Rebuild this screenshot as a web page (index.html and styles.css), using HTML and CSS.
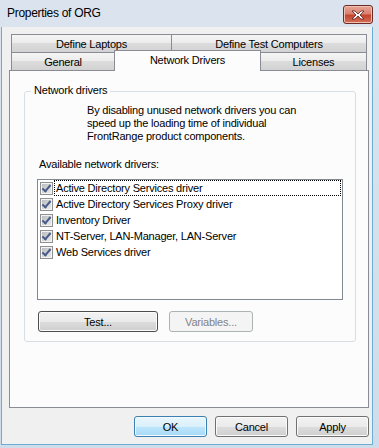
FILE: index.html
```html
<!DOCTYPE html>
<html lang="en">

<head>
  <meta charset="UTF-8">
  <title>Properties of ORG</title>
  <link rel="stylesheet" href="styles.css">
</head>

<body>
  <div class="window">
    <div class="titlebar">
      <span class="title">Properties of ORG</span>
      <span class="close-btn">
        <svg width="16" height="10" viewBox="0 0 16 10">
          <path d="M2 1 L5 1 L8 4 L11 1 L14 1 L10 5 L14 9 L11 9 L8 6 L5 9 L2 9 L6 5 Z" fill="#ffffff" stroke="#5a2020" stroke-width="0.8" stroke-linejoin="round"/>
        </svg>
      </span>
    </div>

    <div class="client">
      <div class="tab-row">
        <div class="tab tab-laptops">Define Laptops</div>
        <div class="tab tab-test">Define Test Computers</div>
      </div>
      <div class="tab-row">
        <div class="tab tab-general">General</div>
        <div class="tab tab-active">Network Drivers</div>
        <div class="tab tab-licenses">Licenses</div>
      </div>

      <div class="tab-page">
        <div class="group">
          <div class="group-label">Network drivers</div>
          <p class="desc">By disabling unused network drivers you can<br>speed up the loading time of individual<br>FrontRange product components.</p>
          <p class="list-label">Available network drivers:</p>
          <ul class="driver-list">
            <li class="driver">
              <span class="check"></span>
              <span class="driver-name focused">Active Directory Services driver</span>
            </li>
            <li class="driver">
              <span class="check"></span>
              <span class="driver-name">Active Directory Services Proxy driver</span>
            </li>
            <li class="driver">
              <span class="check"></span>
              <span class="driver-name">Inventory Driver</span>
            </li>
            <li class="driver">
              <span class="check"></span>
              <span class="driver-name">NT-Server, LAN-Manager, LAN-Server</span>
            </li>
            <li class="driver">
              <span class="check"></span>
              <span class="driver-name">Web Services driver</span>
            </li>
          </ul>
          <div class="group-btns">
            <button class="btn btn-test">Test...</button>
            <button class="btn btn-vars" disabled>Variables...</button>
          </div>
        </div>
      </div>

      <div class="dialog-btns">
        <button class="btn btn-default">OK</button>
        <button class="btn">Cancel</button>
        <button class="btn">Apply</button>
      </div>
    </div>
  </div>
</body>

</html>
```

FILE: styles.css
```css
* {
  margin: 0;
  padding: 0;
  box-sizing: border-box;
}

body {
  font-family: "Liberation Sans", Arial, sans-serif;
  font-size: 11px;
  letter-spacing: -0.2px;
  color: #000000;
  background: #ffffff;
}

.window {
  width: 379px;
  height: 448px;
  display: flex;
  flex-direction: column;
  background: linear-gradient(#dbe4ee, #cfdcea);
  overflow: hidden;
}

.titlebar {
  height: 27px;
  display: flex;
  justify-content: space-between;
  align-items: flex-start;
}

.title {
  font-size: 12px;
  letter-spacing: -0.3px;
  line-height: 27px;
  padding-left: 7px;
  color: #000000;
}

.close-btn {
  width: 30px;
  height: 19px;
  margin-top: 5px;
  margin-right: 6px;
  border: 1px solid #6b2b26;
  border-radius: 3px;
  background: linear-gradient(#e8a696 0%, #d9816f 45%, #c5452e 55%, #d2705a 100%);
  box-shadow: inset 0 0 0 1px #f0c0b4;
  display: flex;
  align-items: center;
  justify-content: center;
}

.client {
  flex: 1;
  margin: 0 6px 3px 1px;
  border: 1px solid #6aaed6;
  border-top: none;
  background: #f0f0f0;
  padding: 7px 3px 0 7px;
}

/* tabs */

.tab-row {
  display: flex;
  height: 18px;
  padding-left: 2px;
  align-items: flex-start;
}

.tab {
  height: 18px;
  border: 1px solid #898c95;
  border-bottom: none;
  background: linear-gradient(#f5f5f5 0%, #ececec 45%, #dcdcdc 50%, #d2d2d2 100%);
  text-align: center;
  line-height: 17px;
  padding-top: 1px;
}

.tab-laptops {
  width: 161px;
}

.tab-test {
  width: 196px;
  margin-left: -1px;
}

.tab-general {
  width: 104px;
}

.tab-active {
  position: relative;
  z-index: 1;
  width: 147px;
  height: 21px;
  margin-top: -2px;
  margin-left: -1px;
  background: #fcfcfc;
  padding-top: 0;
  line-height: 19px;
}

.tab-licenses {
  width: 107px;
  margin-left: -1px;
}

.tab-page {
  width: 360px;
  height: 338px;
  border: 1px solid #898c95;
  background: #fcfcfc;
  padding-top: 20px;
}

/* group box */

.group {
  margin: 0 12px 0 14px;
  border: 1px solid #d5dfe5;
  border-radius: 3px;
  padding-bottom: 9px;
}

.group-label {
  width: fit-content;
  margin: -8px 0 0 6px;
  padding: 0 3px;
  line-height: 13px;
  background: #fcfcfc;
}

.desc {
  margin: 7px 0 0 62px;
  line-height: 13px;
}

.list-label {
  margin: 15px 0 0 14px;
  line-height: 13px;
}

.driver-list {
  list-style: none;
  margin: 8px 0 0 12px;
  width: 306px;
  height: 121px;
  border: 1px solid #828790;
  background: #ffffff;
}

.driver {
  display: flex;
  align-items: center;
  height: 16px;
  padding-left: 2px;
}

.check {
  width: 13px;
  height: 13px;
  flex: none;
  border: 1px solid #8e8f8f;
  background: #f4f4f4;
  position: relative;
}

.check::after {
  content: "";
  position: absolute;
  left: 1px;
  top: 1px;
  width: 9px;
  height: 9px;
  background: linear-gradient(135deg, #b9bdc3, #e8e9ea);
}

.check::before {
  content: "";
  position: absolute;
  z-index: 1;
  left: 3px;
  top: 0px;
  width: 3px;
  height: 7px;
  border-right: 2px solid #4a5c86;
  border-bottom: 2px solid #4a5c86;
  transform: rotate(40deg);
}

.driver-name {
  flex: 1;
  margin-left: 1px;
  margin-right: 1px;
  height: 16px;
  line-height: 14px;
  padding-left: 1px;
  border: 1px solid transparent;
  white-space: nowrap;
}

.driver-name.focused {
  border: 1px dotted #000000;
}

.group-btns {
  display: flex;
  gap: 11px;
  margin: 11px 0 0 13px;
}

/* buttons */

.btn {
  font-family: "Liberation Sans", Arial, sans-serif;
  font-size: 11px;
  letter-spacing: -0.2px;
  height: 21px;
  border: 1px solid #707070;
  border-radius: 3px;
  background: linear-gradient(#f2f2f2 0%, #ebebeb 50%, #dddddd 50%, #cfcfcf 100%);
  box-shadow: inset 0 0 0 1px #fbfbfb;
  color: #000000;
}

.btn-test {
  width: 120px;
  border-color: #4d4d4d;
}

.btn-vars {
  width: 84px;
  border-color: #adb2b5;
  background: #f4f4f4;
  box-shadow: none;
  color: #838383;
}

.dialog-btns {
  display: flex;
  justify-content: flex-end;
  gap: 8px;
  margin-top: 8px;
}

.dialog-btns > .btn {
  width: 73px;
}

.btn-default {
  border-color: #3c7fb1;
  background: linear-gradient(#eaf6fd 0%, #d9f0fc 50%, #bee6fd 50%, #a7d9f5 100%);
  box-shadow: inset 0 0 0 1px #f4fbfe;
}
```
